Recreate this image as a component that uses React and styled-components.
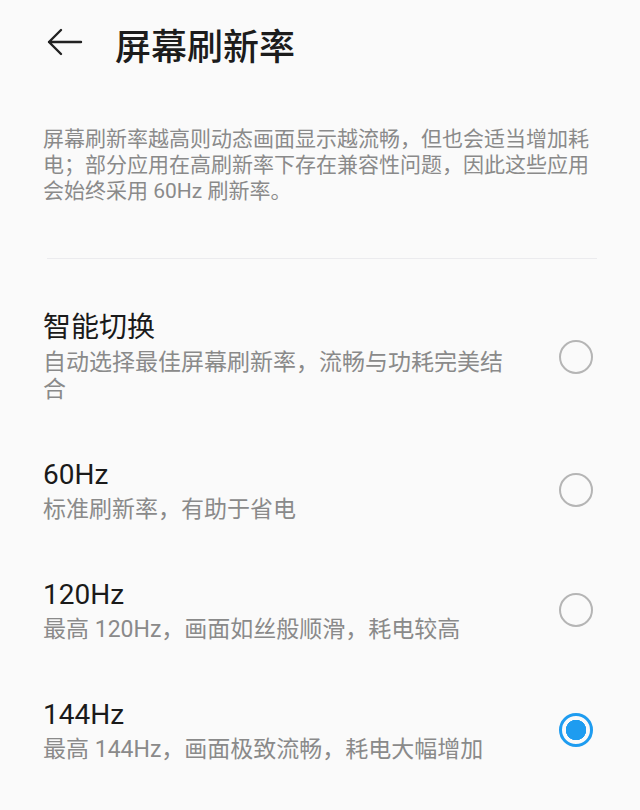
import styled, { createGlobalStyle } from 'styled-components';
import { useState } from 'react';

const GlobalStyle = createGlobalStyle`
    body {
        margin: 0;
        background: #fafafa;
        font-family: Roboto, "Noto Sans CJK SC", sans-serif;
    }
`;

const options = [
    { id: 'smart', title: '智能切换', desc: '自动选择最佳屏幕刷新率，流畅与功耗完美结合' },
    { id: '60', title: '60Hz', desc: '标准刷新率，有助于省电' },
    { id: '120', title: '120Hz', desc: '最高 120Hz，画面如丝般顺滑，耗电较高' },
    { id: '144', title: '144Hz', desc: '最高 144Hz，画面极致流畅，耗电大幅增加' },
];

export default function App() {
    const [selected, setSelected] = useState('144');

    return (
        <Page>
            <GlobalStyle />
            <Header>
                <BackButton aria-label="返回">
                    <svg width="36" height="28" viewBox="0 0 36 28" fill="none">
                        <path d="M2 14H34M14 2L2 14L14 26" stroke="#222" strokeWidth="2.4" strokeLinecap="round" strokeLinejoin="round" />
                    </svg>
                </BackButton>
                <Title>屏幕刷新率</Title>
            </Header>
            <Description>
                屏幕刷新率越高则动态画面显示越流畅，但也会适当增加耗电；部分应用在高刷新率下存在兼容性问题，因此这些应用会始终采用 60Hz 刷新率。
            </Description>
            <Divider />
            <List>
                {options.map(opt => (
                    <Item key={opt.id} onClick={() => setSelected(opt.id)}>
                        <ItemText>
                            <ItemTitle>{opt.title}</ItemTitle>
                            <ItemDesc>{opt.desc}</ItemDesc>
                        </ItemText>
                        <Radio $checked={selected === opt.id} />
                    </Item>
                ))}
            </List>
        </Page>
    );
}

const Page = styled.div`
    width: 640px;
    min-height: 810px;
    box-sizing: border-box;
    padding: 0 43px;
    background: #fafafa;
`;

const Header = styled.div`
    height: 84px;
    display: flex;
    align-items: center;
`;

const BackButton = styled.button`
    border: none;
    background: none;
    padding: 0;
    margin-left: 4px;
    width: 36px;
    height: 28px;
    display: flex;
    :hover {
        cursor: pointer;
    }
`;

const Title = styled.h1`
    margin: 4px 0 0 32px;
    font-size: 36px;
    font-weight: 500;
    color: #1c1c1c;
    font-family: "Noto Sans CJK SC", sans-serif;
`;

const Description = styled.p`
    margin: 0;
    padding-top: 42px;
    font-size: 21px;
    line-height: 26px;
    color: #8a8a8a;
    font-family: Roboto, "Noto Sans CJK SC", sans-serif;
`;

const Divider = styled.div`
    height: 1px;
    margin: 54px 0 0 4px;
    background: #ebebee;
`;

const List = styled.div`
    margin-top: 24px;
    display: flex;
    flex-direction: column;
`;

const Item = styled.div`
    display: flex;
    align-items: center;
    justify-content: space-between;
    padding: 27px 0;
    :hover {
        cursor: pointer;
    }
`;

const ItemText = styled.div`
    width: 472px;
    display: flex;
    flex-direction: column;
    gap: 3px;
`;

const ItemTitle = styled.div`
    font-size: 28px;
    line-height: 36px;
    color: #1a1a1a;
`;

const ItemDesc = styled.div`
    font-size: 23px;
    line-height: 27px;
    color: #8a8a8a;
`;

const Radio = styled.span`
    width: 34px;
    height: 34px;
    margin-right: 4px;
    box-sizing: border-box;
    border-radius: 50%;
    border: ${p => (p.$checked ? '3px solid #1e9cf0' : '2px solid #b5b5b5')};
    background: ${p => (p.$checked ? 'radial-gradient(circle, #1e9cf0 0 10px, transparent 10.5px)' : 'transparent')};
    flex-shrink: 0;
`;
